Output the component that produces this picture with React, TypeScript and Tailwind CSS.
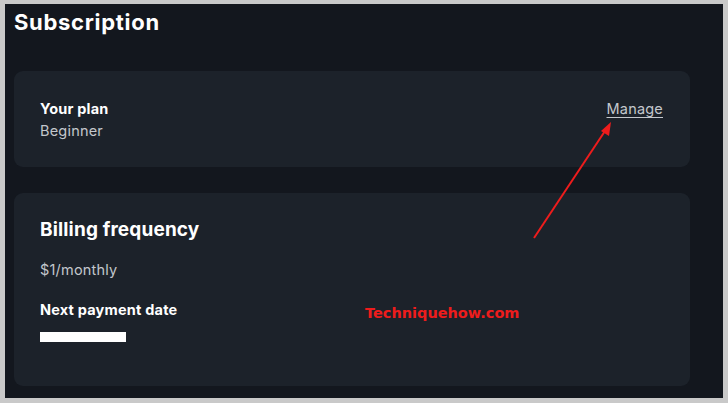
import { ReactNode } from 'react';

function Card({ children, className }: { children: ReactNode; className?: string }) {
  return <div className={`rounded-[9px] bg-[#1c222a] ${className ?? ''}`}>{children}</div>;
}

export default function App() {
  return (
    <div className="relative h-[403px] w-[728px] bg-[#c9c9c9] pt-[4px] pb-[5px] pl-[5px] pr-[5px]" style={{ fontFamily: 'Inter, "Noto Sans", sans-serif' }}>
      <div className="h-full bg-[#13171e] pl-[9px] pr-[33px] pt-[4px]">
        <h1 className="text-[22px] font-bold leading-[29px] tracking-[0.7px] text-white">Subscription</h1>

        <Card className="mt-[34px] flex h-[96px] items-start justify-between pl-[26px] pr-[27px] pt-[29px]">
          <div>
            <p className="text-[14.5px] font-bold leading-[18px] tracking-[0.2px] text-white">Your plan</p>
            <p className="mt-[4px] text-[14.5px] leading-[18px] tracking-[0.2px] text-[#c3c7cc]">Beginner</p>
          </div>
          <a className="text-[14.5px] leading-[18px] tracking-[0.2px] text-[#c3c7cc] underline underline-offset-[3px]">Manage</a>
        </Card>

        <Card className="mt-[26px] h-[193px] pl-[26px] pt-[24px]">
          <p className="text-[19px] font-bold leading-[26px] tracking-[0.15px] text-white">Billing frequency</p>
          <p className="mt-[18px] text-[14.5px] leading-[18px] tracking-[0.2px] text-[#c3c7cc]">$1/monthly</p>
          <p className="mt-[22px] text-[14.5px] font-bold leading-[18px] tracking-[0.2px] text-white">Next payment date</p>
          <div className="mt-[13px] h-[10px] w-[86px] bg-white" />
        </Card>
      </div>

      <span
        className="absolute left-[365px] top-[303px] text-[14.5px] font-bold leading-[20px] text-[#ee1c1c]"
        style={{ fontFamily: '"DejaVu Sans", Verdana, sans-serif' }}
      >
        Techniquehow.com
      </span>

      <svg className="pointer-events-none absolute left-0 top-0" width="728" height="403">
        <line x1="534" y1="238" x2="605" y2="131" stroke="#ee1c1c" strokeWidth="2" />
        <polygon points="611,122 601,131 609,136" fill="#ee1c1c" />
      </svg>
    </div>
  );
}
